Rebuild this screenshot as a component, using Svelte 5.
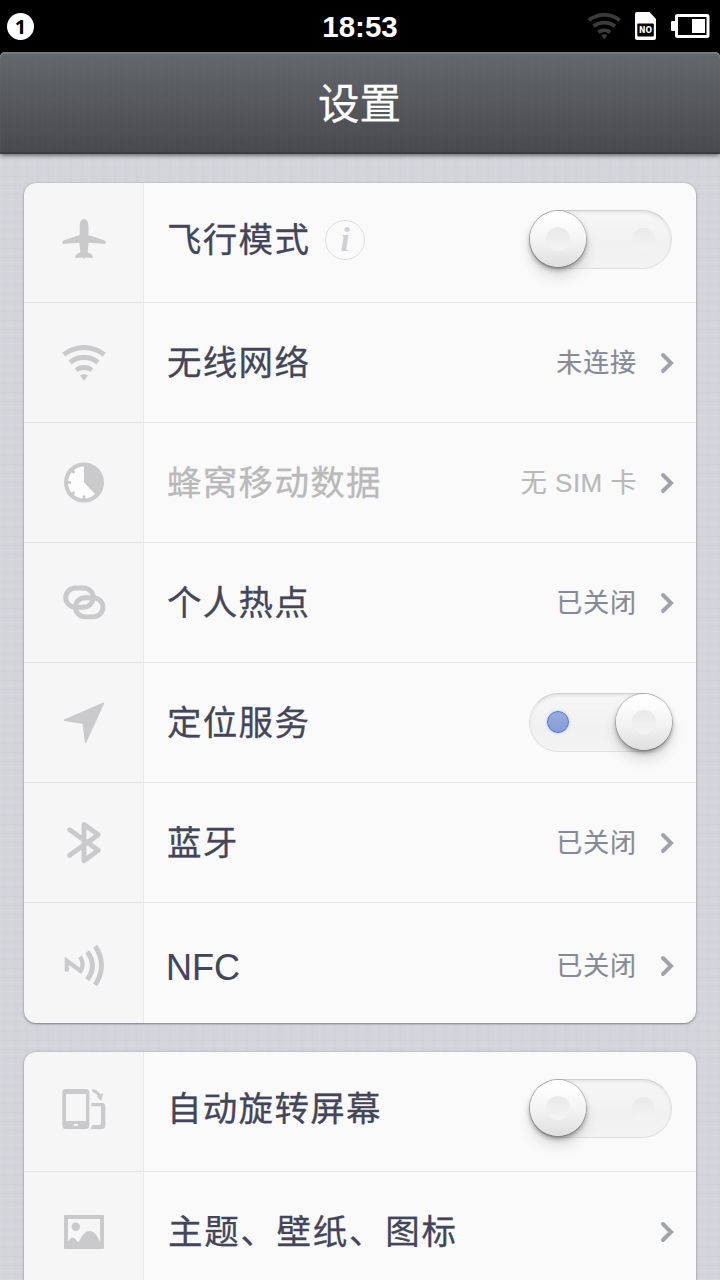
<script>
  let groups = $state([
    [
      { icon: 'plane', label: '飞行模式', info: true, toggle: true, on: false },
      { icon: 'wifi', label: '无线网络', value: '未连接' },
      { icon: 'data', label: '蜂窝移动数据', value: '无 SIM 卡', disabled: true },
      { icon: 'hotspot', label: '个人热点', value: '已关闭' },
      { icon: 'location', label: '定位服务', toggle: true, on: true },
      { icon: 'bluetooth', label: '蓝牙', value: '已关闭' },
      { icon: 'nfc', label: 'NFC', latin: true, value: '已关闭' }
    ],
    [
      { icon: 'rotate', label: '自动旋转屏幕', toggle: true, on: false },
      { icon: 'picture', label: '主题、壁纸、图标', loose: true },
      { icon: '', label: '' }
    ]
  ]);
</script>

{#snippet glyph(name)}
  <svg class="glyph" viewBox="0 0 48 48" width="48" height="48" aria-hidden="true">
    {#if name === 'plane'}
      <path class="fill" d="M24 3c2.800 0 4.500 3.500 4.500 7.500V19l15.600 5.200c1.200.4 1.500 1 1.500 2V28l-17-1.200-.9 9.200 3.600 2.300c1 .6 1.400 1.200 1.400 2.200v1.500L25.300 41.500 24 43.200l-1.300-1.700L15.300 42v-1.500c0-1 .4-1.600 1.400-2.200l3.600-2.300-.9-9.200L2.600 28v-1.800c0-1 .3-1.600 1.500-2L19.700 19v-8.500C19.700 6.500 21.200 3 24 3z" />
    {:else if name === 'wifi'}
      <path class="line" d="M3.800 15.600a32.500 32.500 0 0 1 40.400 0M10 23.400a22.500 22.500 0 0 1 28 0M16.200 31.200a12.500 12.500 0 0 1 15.600 0" />
      <path class="fill" d="M24 41.800l-4-5.200a6.500 6.500 0 0 1 8 0z" />
    {:else if name === 'data'}
      <circle cx="24" cy="23.500" r="18" fill="#fdfdfd" stroke="#cacacc" stroke-width="4" />
      <path class="fill" d="M24 4a19.500 19.500 0 0 1 13 33L24 23.500z" />
      <path class="tick" d="M7 23.500h4M12 11.500l2.300 2.300M12 35.500l2.300-2.300M24 40.500v-4" />
    {:else if name === 'hotspot'}
      <rect class="line" x="5.700" y="9" width="27.500" height="19.200" rx="9.600" />
      <rect class="line" x="15.400" y="18.700" width="27.500" height="19.200" rx="9.600" />
    {:else if name === 'location'}
      <path class="fill round" d="M43.500 4.200L4.500 21.200l18.800 3L25.600 43.200z" />
    {:else if name === 'bluetooth'}
      <path class="line cap" d="M9.600 10.800L38.300 31.200 24 41.700V5.500l14.300 10.200L9.600 36.300" />
    {:else if name === 'nfc'}
      <path class="line thin" d="M6.800 29.500V18.700L20.600 28.900q4.300-7 -.6-14.200" />
      <path class="line" d="M27.300 9.800q10.200 14 0 28M35.200 4.200q12.600 19.300 0 38.600" />
    {:else if name === 'rotate'}
      <path class="fill" fill-rule="evenodd" d="M5.800 4h20a3.500 3.500 0 0 1 3.500 3.500v33a3.500 3.500 0 0 1-3.500 3.500h-20a3.500 3.500 0 0 1-3.500-3.500v-33A3.500 3.500 0 0 1 5.800 4zM6 9v27h20V9zM13.700 39v2H18v-2zM31.300 18H42a3.300 3.300 0 0 1 3.300 3.300v19.400A3.300 3.300 0 0 1 42 44H30.300l2.200-4H39q2 0 2-2V21.300h-9.700z" />
      <path class="fill" d="M32.200 3.800c3.400.7 6.300 2.700 8.500 5.800l2.700-2.200-2.200 8.600-5-4.700 2.200.3c-1.700-2.200-3.800-4-6.300-5z" />
    {:else if name === 'picture'}
      <path class="fill" fill-rule="evenodd" d="M5 7h38a1 1 0 0 1 1 1v32a1 1 0 0 1-1 1H5a1 1 0 0 1-1-1V8a1 1 0 0 1 1-1zM8 11v22.500c3.500-5.300 6-5.300 8.500-1q1.800 2.500 3.200 0c5.600-13 14.800-13 20.300 1.500V11z" />
      <circle class="fill" cx="15.800" cy="18.700" r="4.200" />
    {/if}
  </svg>
{/snippet}

<div class="screen">
  <div class="status">
    <span class="badge">1</span>
    <span class="time">18:53</span>
    <div class="tray">
      <svg width="34" height="28" viewBox="0 0 34 28" aria-hidden="true">
        <g fill="none" stroke="#3b3b3b" stroke-width="3.700">
          <path d="M1.800 8.300a25 25 0 0 1 31 0M6.500 14.300a17.500 17.500 0 0 1 21.600 0M11.300 20.300a10 10 0 0 1 12 0" />
        </g>
        <path d="M17.300 27.500l-3-4a4.500 4.500 0 0 1 6 0z" fill="#3b3b3b" />
      </svg>
      <svg width="22" height="28" viewBox="0 0 22 28" aria-hidden="true">
        <path d="M2 0h12.500L21 7v19a2 2 0 0 1-2 2H2a2 2 0 0 1-2-2V2a2 2 0 0 1 2-2z" fill="#fff" />
        <rect x="2.300" y="11.500" width="16.500" height="13" rx="1" fill="#000" />
        <text x="10.600" y="21" text-anchor="middle" textLength="13" lengthAdjust="spacingAndGlyphs">NO</text>
      </svg>
      <svg width="39" height="24" viewBox="0 0 39 24" aria-hidden="true">
        <rect x="0" y="7" width="6" height="10" rx="1" fill="#fff" />
        <rect x="5.500" y="1.500" width="31.500" height="21" rx="1" fill="#000" stroke="#fff" stroke-width="3" />
        <rect x="21" y="5" width="13" height="14" fill="#fff" />
      </svg>
    </div>
  </div>

  <header class="titlebar"><h1>设置</h1></header>

  <main class="list">
    {#each groups as group}
      <section class="card">
        {#each group as item}
          <div class="row" class:disabled={item.disabled}>
            <div class="icon">{@render glyph(item.icon)}</div>
            <div class="body">
              <span class="label" class:latin={item.latin} class:loose={item.loose}>{item.label}</span>
              {#if item.info}<span class="info">i</span>{/if}
              {#if item.toggle}
                <button
                  type="button"
                  class="switch"
                  class:on={item.on}
                  role="switch"
                  aria-checked={item.on}
                  aria-label={item.label}
                  onclick={() => (item.on = !item.on)}
                >
                  <span class="dot"></span>
                  <span class="knob"></span>
                </button>
              {:else if item.label}
                <span class="value">{item.value ?? ''}</span>
                <svg class="chevron" width="14" height="22" viewBox="0 0 14 22" aria-hidden="true">
                  <path d="M3 3l8 8-8 8" />
                </svg>
              {/if}
            </div>
          </div>
        {/each}
      </section>
    {/each}
  </main>
</div>

<style>
  :global(body) {
    background: #000;
  }

  .screen {
    display: flex;
    flex-direction: column;
    height: 1280px;
    overflow: hidden;
    font-family: 'Liberation Sans', 'Noto Sans CJK SC', sans-serif;
    background:
      repeating-linear-gradient(90deg, rgb(255 255 255 / 0.05) 0 1px, transparent 1px 4px, rgb(90 95 110 / 0.015) 4px 6px, transparent 6px 11px),
      repeating-linear-gradient(0deg, rgb(255 255 255 / 0.05) 0 1px, transparent 1px 5px, rgb(90 95 110 / 0.015) 5px 6px, transparent 6px 9px),
      #d4d5db;
  }

  .status {
    display: grid;
    grid-template-columns: 1fr auto 1fr;
    align-items: center;
    flex: none;
    height: 52px;
    padding: 0 10px 0 7px;
    background: #000;
    color: #fff;
  }

  .badge {
    width: 27px;
    height: 27px;
    border-radius: 50%;
    background: #fff;
    color: #000;
    font: bold 20px/27px 'Noto Sans', sans-serif;
    text-align: center;
  }

  .time {
    font-size: 29.500px;
    font-weight: bold;
    line-height: 32px;
    padding: 2px 0 0 3px;
  }

  .tray {
    display: flex;
    align-items: center;
    justify-content: flex-end;
    gap: 14px;
  }

  .tray text {
    font: bold 9px 'DejaVu Sans', sans-serif;
    fill: #fff;
  }

  .titlebar {
    flex: none;
    display: flex;
    align-items: center;
    justify-content: center;
    position: relative;
    height: 102px;
    color: #fff;
    background:
      repeating-linear-gradient(90deg, rgb(255 255 255 / 0.012) 0 1px, transparent 1px 7px),
      linear-gradient(#64676c, #48494d);
    border-radius: 5px 5px 0 0;
    box-shadow:
      inset 0 2px 1px rgb(255 255 255 / 0.13),
      inset 0 -2px 0 #3b3b3f,
      0 1px 5px rgb(0 0 0 / 0.65),
      0 -6px 0 #000;
  }

  h1 {
    margin: 0;
    padding: 3px 1px 0 0;
    font-size: 41.500px;
    font-weight: 400;
    line-height: 60px;
    -webkit-text-stroke: 0.300px #fff;
  }

  .list {
    padding: 29px 24px 0;
  }

  .card {
    margin-bottom: 29px;
    overflow: hidden;
    border-radius: 12px;
    background: #fafafa;
    box-shadow:
      0 1px 2px rgb(60 62 75 / 0.5),
      0 0 3px rgb(60 62 75 / 0.2);
  }

  .row {
    display: flex;
    height: 120px;
    box-shadow: inset 0 -1px 0 #e7e7e8;
  }

  .row:last-child {
    box-shadow: none;
  }

  .icon,
  .body {
    display: flex;
    align-items: center;
    box-sizing: border-box;
  }

  .row:first-child > div {
    padding-bottom: 6px;
  }

  .row:last-child > div {
    padding-top: 6px;
  }

  .icon {
    flex: none;
    justify-content: center;
    width: 120px;
    background: rgb(0 0 0 / 0.014);
    box-shadow: inset -1px 0 0 #e9e9ea;
  }

  .glyph {
    display: block;
  }

  .fill {
    fill: #cacacc;
  }

  .round {
    stroke: #cacacc;
    stroke-width: 1.500;
    stroke-linejoin: round;
  }

  .line {
    fill: none;
    stroke: #cacacc;
    stroke-width: 4.900;
  }

  .thin {
    stroke-width: 4.200;
  }

  .cap {
    stroke-linecap: round;
    stroke-linejoin: round;
  }

  .tick {
    fill: none;
    stroke: #c6c6c9;
    stroke-width: 2.500;
  }

  .body {
    flex: 1;
    padding-left: 23px;
    padding-right: 22px;
  }

  .label {
    color: #434659;
    font-size: 34.500px;
    line-height: 50px;
    letter-spacing: 1.300px;
    white-space: nowrap;
    -webkit-text-stroke: 0.300px currentColor;
  }

  .latin {
    margin-left: -1px;
    padding-top: 3px;
    font-size: 36px;
    letter-spacing: 0;
    -webkit-text-stroke-width: 0.100px;
  }

  .loose {
    margin-left: 1px;
    letter-spacing: 1.700px;
  }

  .info {
    width: 38px;
    height: 38px;
    margin-left: 15px;
    border: 1px solid #dedee0;
    border-radius: 50%;
    color: #cfcfd1;
    font: italic bold 33px/38px 'Liberation Serif', serif;
    text-align: center;
  }

  .value {
    margin-left: auto;
    color: #868a94;
    font-size: 26px;
    line-height: 38px;
    letter-spacing: 0.900px;
    white-space: nowrap;
    -webkit-text-stroke: 0.200px currentColor;
  }

  .chevron {
    flex: none;
    margin-left: 23px;
  }

  .chevron path {
    fill: none;
    stroke: #a2a4aa;
    stroke-width: 4;
    stroke-linecap: round;
  }

  .disabled .label,
  .disabled .value {
    color: #b9b9ba;
  }

  .disabled .value {
    letter-spacing: 0.500px;
  }

  .switch {
    position: relative;
    flex: none;
    width: 143px;
    height: 59px;
    margin: 0 2.500px 2px auto;
    padding: 0;
    border: 1px solid #e0e0e0;
    border-top-color: #cecece;
    border-radius: 30px;
    background: linear-gradient(#f6f6f6, #f1f1f1 60%, #f3f3f3);
    box-shadow: inset 0 2px 3px rgb(0 0 0 / 0.07);
  }

  .dot {
    position: absolute;
    top: 17px;
    right: 16px;
    width: 23px;
    height: 23px;
    border-radius: 50%;
    background: linear-gradient(#e9e9e9, #f4f4f4);
  }

  .knob {
    position: absolute;
    top: 0;
    left: 0;
    display: flex;
    width: 56px;
    height: 56px;
    border-radius: 50%;
    background: linear-gradient(#fff 10%, #f4f4f4 50%, #dfdfdf);
    box-shadow:
      0 0 0 1px rgb(0 0 0 / 0.16),
      0 3px 5px rgb(0 0 0 / 0.36),
      0 10px 14px rgb(0 0 0 / 0.12);
  }

  .knob::after {
    content: '';
    width: 24px;
    height: 24px;
    margin: auto;
    border-radius: 50%;
    background: linear-gradient(#e9e9e9, #f3f3f3);
  }

  .on .knob {
    left: 86px;
  }

  .on .dot {
    right: auto;
    left: 17px;
    width: 20px;
    height: 20px;
    border: 1px solid #5478cf;
    background: linear-gradient(#9aabdd, #869cd8);
    box-shadow: 0 0 3px rgb(110 160 235 / 0.5);
  }
</style>
